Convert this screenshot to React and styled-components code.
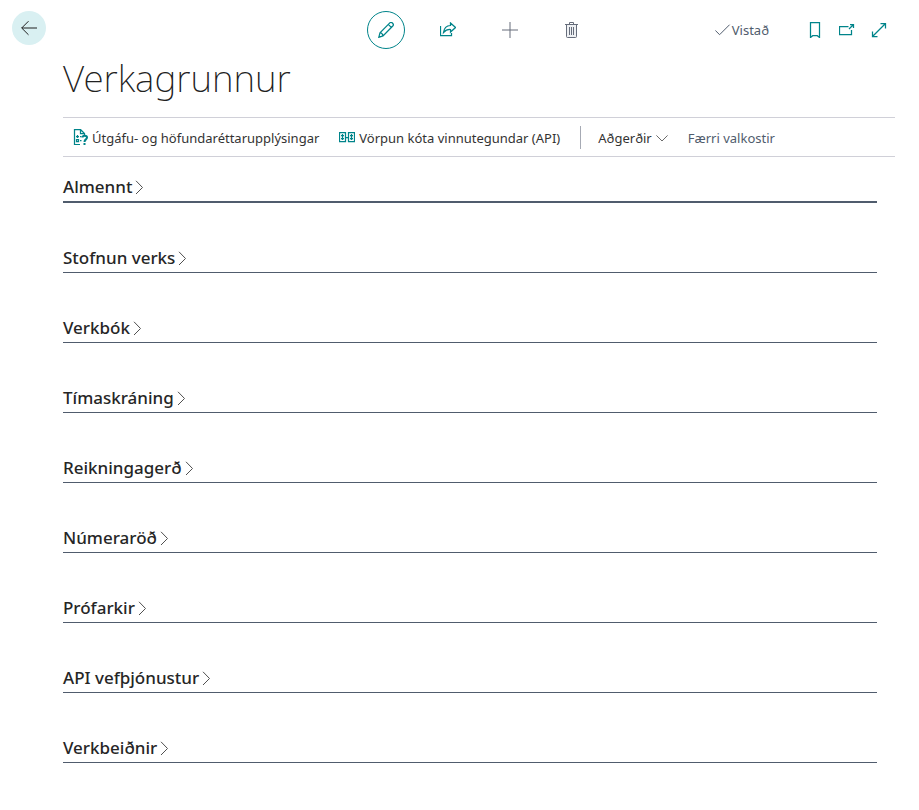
import React from 'react';
import styled, { createGlobalStyle } from 'styled-components';

const GlobalStyle = createGlobalStyle`
  body {
    margin: 0;
    background: #ffffff;
    color: #212121;
    font-family: "Noto Sans", "Open Sans", sans-serif;
    font-size: 13px;
  }

  * {
    box-sizing: border-box;
  }
`;

const teal = '#00848a';
const slate = '#505c6d';

const Page = styled.div`
  display: grid;
  grid-template-columns: 51px minmax(0, 1fr);
  padding: 11px 24px 0 12px;
`;

const Content = styled.main`
  min-width: 0;
`;

const Header = styled.header`
  display: grid;
  grid-template-columns: 1fr auto 1fr;
  align-items: center;
`;

const HeaderActions = styled.div`
  grid-column: 2;
  display: flex;
  gap: 24px;
`;

const HeaderEnd = styled.div`
  display: flex;
  align-items: center;
  justify-content: flex-end;
`;

const IconButton = styled.button`
  display: flex;
  align-items: center;
  justify-content: center;
  width: ${props => props.$size}px;
  height: ${props => props.$size}px;
  padding: 0;
  border: 1px solid ${props => (props.$outlined ? teal : 'transparent')};
  border-radius: 50%;
  background: transparent;
  color: ${props => (props.$muted ? '#666d7b' : teal)};
  cursor: pointer;
`;

const BackButton = styled(IconButton)`
  background: #d9f0f2;
  color: #212121;
`;

const Status = styled.span`
  display: flex;
  align-items: center;
  gap: 1px;
  margin-right: 30px;
  color: ${slate};
`;

const Title = styled.h1`
  margin: 3px 0 13px;
  font-size: 37px;
  line-height: 52px;
  font-weight: 200;
`;

const CommandBar = styled.nav`
  display: flex;
  align-items: center;
  height: 40px;
  padding-left: 9px;
  border-top: 1px solid #d0d0d8;
  border-bottom: 1px solid #d0d0d8;
`;

const Command = styled.button`
  display: flex;
  align-items: center;
  gap: 4px;
  margin-right: 20px;
  padding: 0;
  border: 0;
  background: transparent;
  font: inherit;
  line-height: 20px;
  color: ${props => (props.$muted ? slate : '#333333')};
  white-space: nowrap;
  cursor: pointer;
`;

const CommandLabel = styled.span`
  padding-top: 2px;
`;

const Separator = styled.span`
  width: 1px;
  height: 23px;
  margin-right: 17px;
  background: #a6aab4;
`;

const Sections = styled.div`
  margin-right: 18px;
  padding-top: 16px;
`;

const Section = styled.h2`
  margin: 0 0 41px;
  border-bottom: ${props => (props.$active ? 2 : 1)}px solid ${slate};
`;

const SectionToggle = styled.button`
  display: flex;
  align-items: center;
  gap: 3px;
  padding: 0;
  border: 0;
  background: transparent;
  font-family: inherit;
  font-size: 17px;
  line-height: 28px;
  font-weight: 500;
  color: #262626;
  cursor: pointer;
`;

const Icon = styled.svg`
  flex: none;
  fill: none;
  stroke: currentColor;
  stroke-width: ${props => (props.$bold ? 1.25 : 1)};
`;

const BackIcon = () => (
  <Icon width="16" height="16" viewBox="0 0 16 16" aria-hidden="true">
    <path d="M16 8H.7M7.5 1.2L.7 8l6.8 6.8" />
  </Icon>
);

const PencilIcon = () => (
  <Icon $bold width="16" height="16" viewBox="0 0 16 16" aria-hidden="true">
    <path d="M.8 15.3L2 10.700 11.8.9c.8-.7 2-.5 2.8.3s1 2 .2 2.8L5 13.9zM2 10.7c1.4.2 2.7 1.6 3 3.2M10.3 2.4l3.2 3.2M.9 14l1.100 1" />
  </Icon>
);

const ShareIcon = () => (
  <Icon $bold width="16" height="16" viewBox="0 0 16 16" aria-hidden="true">
    <path d="M.5 4v9.5h11V11M10.5 1l5 4.5-5 4.5V7.5C7.5 7.3 5.5 8.2 3.5 10.5 4 6.3 6.5 3.7 10.5 3.5z" />
  </Icon>
);

const PlusIcon = () => (
  <Icon width="16" height="16" viewBox="0 0 16 16" aria-hidden="true">
    <path d="M8 0v16M0 8h16" />
  </Icon>
);

const TrashIcon = () => (
  <Icon width="16" height="16" viewBox="0 0 16 16" aria-hidden="true">
    <path d="M2.5 2.5v12q0 1 1 1h8q1 0 1-1v-12" fill="#eef0f3" />
    <path d="M1 2.5h13M5.5 2.5v-2h4v2M5.5 5v8M7.5 5v8M9.5 5v8" />
  </Icon>
);

const CheckIcon = () => (
  <Icon width="16" height="16" viewBox="0 0 16 16" aria-hidden="true">
    <path d="M.4 8.5l4.2 4.2L14.6 2.7" />
  </Icon>
);

const BookmarkIcon = () => (
  <Icon $bold width="16" height="16" viewBox="0 0 16 16" aria-hidden="true">
    <path d="M3.5.5h9v15L10.3 13.7H5.7L3.5 15.5z" />
  </Icon>
);

const PopOutIcon = () => (
  <Icon $bold width="16" height="16" viewBox="0 0 16 16" aria-hidden="true">
    <path d="M9.5 4.5H.5v8h12V8M10 7l4.5-4.5M11 2.5h3.5V6" />
  </Icon>
);

const ExpandIcon = () => (
  <Icon $bold width="16" height="16" viewBox="0 0 16 16" aria-hidden="true">
    <path d="M1.5 14.5l13-13M9.5 1.5h5v5M1.5 9.5v5h5" />
  </Icon>
);

const ReleaseIcon = () => (
  <Icon $bold width="16" height="16" viewBox="0 0 16 16" color={teal} aria-hidden="true">
    <path d="M8 15.5H2.500V.5h6l4 4V6M8.500.5v4h4" />
    <path d="M4 7.5h3M5.5 6v3M8 7.5h1.5M4.5 10.5h2v2h-2zM8 11.5h1.5" />
    <path d="M10.5 8.5c0-2.4 4.5-2.4 4.5 0 0 2-2.5 1.8-2.5 4.5M12.5 14v2" strokeWidth="2" />
  </Icon>
);

const MappingIcon = () => (
  <Icon $bold width="16" height="16" viewBox="0 0 16 16" color={teal} aria-hidden="true">
    <path d="M.5 3.5h6v9h-6zM9.5 3.5h6v9h-6zM6.5 8.5h3" />
    <path d="M3.5 5v6M2 6.5h3M2 9.5h3M12.5 5v6M11 6.5h3M11 9.5h3" />
  </Icon>
);

const ChevronDown = () => (
  <Icon width="12" height="12" viewBox="0 0 12 12" color="#6b6b6b" aria-hidden="true">
    <path d="M.4 4.4L6 10l5.6-5.6" />
  </Icon>
);

const ChevronRight = () => (
  <Icon width="9" height="14" viewBox="0 0 9 14" color="#505050" aria-hidden="true">
    <path d="M1 .8L7.5 7.5 1 14" />
  </Icon>
);

const sections = [
  'Almennt',
  'Stofnun verks',
  'Verkbók',
  'Tímaskráning',
  'Reikningagerð',
  'Númeraröð',
  'Prófarkir',
  'API vefþjónustur',
  'Verkbeiðnir',
];

export default function App() {
  return (
    <>
      <GlobalStyle />
      <Page>
        <BackButton $size={34} aria-label="Til baka"><BackIcon /></BackButton>
        <Content>
          <Header>
            <HeaderActions>
              <IconButton $size={38} $outlined aria-label="Breyta"><PencilIcon /></IconButton>
              <IconButton $size={38} aria-label="Deila"><ShareIcon /></IconButton>
              <IconButton $size={38} $muted aria-label="Nýtt"><PlusIcon /></IconButton>
              <IconButton $size={38} $muted aria-label="Eyða"><TrashIcon /></IconButton>
            </HeaderActions>
            <HeaderEnd>
              <Status><CheckIcon />Vistað</Status>
              <IconButton $size={32} aria-label="Bókamerki"><BookmarkIcon /></IconButton>
              <IconButton $size={32} aria-label="Opna í nýjum glugga"><PopOutIcon /></IconButton>
              <IconButton $size={32} aria-label="Stækka"><ExpandIcon /></IconButton>
            </HeaderEnd>
          </Header>
          <Title>Verkagrunnur</Title>
          <CommandBar>
            <Command>
              <ReleaseIcon />
              <CommandLabel>Útgáfu- og höfundaréttarupplýsingar</CommandLabel>
            </Command>
            <Command>
              <MappingIcon />
              <CommandLabel>Vörpun kóta vinnutegundar (API)</CommandLabel>
            </Command>
            <Separator />
            <Command>
              <CommandLabel>Aðgerðir</CommandLabel>
              <ChevronDown />
            </Command>
            <Command $muted>
              <CommandLabel>Færri valkostir</CommandLabel>
            </Command>
          </CommandBar>
          <Sections>
            {sections.map((name, index) => (
              <Section key={name} $active={index === 0}>
                <SectionToggle aria-expanded="false">{name}<ChevronRight /></SectionToggle>
              </Section>
            ))}
          </Sections>
        </Content>
      </Page>
    </>
  );
}
